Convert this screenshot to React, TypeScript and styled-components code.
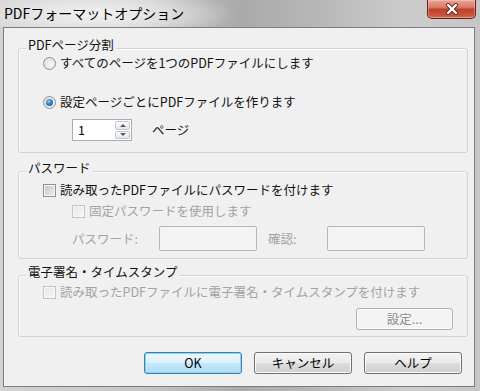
import React from 'react';
import styled, { createGlobalStyle } from 'styled-components';

const FONT = `"Noto Sans CJK JP", "Noto Sans", sans-serif`;

const GlobalStyle = createGlobalStyle`
  html, body {
    margin: 0;
    padding: 0;
    background: #c4c4c4;
  }
  body {
    font-family: ${FONT};
  }
`;

const Window = styled.div`
  width: 480px;
  height: 391px;
  box-sizing: border-box;
  padding-bottom: 4px;
  display: flex;
  flex-direction: column;
  background: linear-gradient(to right, #d2d2d2 0%, #c6c6c6 30%, #aaaaaa 50%, #b6b6b6 65%, #cccccc 85%, #c6c6c6 100%);
`;

const TitleBar = styled.div`
  height: 27px;
  flex: none;
  display: flex;
  justify-content: space-between;
  align-items: flex-start;
  padding: 0 4px 0 4px;
  background:
    radial-gradient(ellipse 140px 26px at 95px 14px, rgba(244, 244, 244, 0.95) 0%, rgba(236, 236, 236, 0.65) 55%, rgba(236, 236, 236, 0) 100%);
`;

const TitleText = styled.div`
  font-size: 14px;
  line-height: 27px;
  color: #000;
`;

const CloseButton = styled.div`
  width: 49px;
  height: 19px;
  box-sizing: border-box;
  border: 1px solid #5e2419;
  border-top: none;
  border-radius: 0 0 5px 5px;
  background: linear-gradient(#e9a494 0%, #d97d69 40%, #c23f2a 52%, #c8533c 85%, #d77558 100%);
  box-shadow: inset 0 0 0 1px rgba(255, 230, 220, 0.35);
  display: flex;
  align-items: center;
  justify-content: center;
`;

const Client = styled.div`
  flex: 1;
  margin: 0 5px 0 3px;
  box-sizing: border-box;
  border: 1px solid #7d7d7d;
  background: #f0f0f0;
  padding: 20px 6px 0 14px;
  display: flex;
  flex-direction: column;
  font-size: 12.5px;
  line-height: 18px;
  color: #111;
`;

const Group = styled.div<{ $gap?: number; $pad: number }>`
  margin-top: ${p => p.$gap ?? 0}px;
  border: 1px solid #d3d3d3;
  border-radius: 3px;
  box-shadow: inset 1px 1px 0 #fbfbfb;
  padding: 0 0 ${p => p.$pad}px 0;
  display: flex;
  flex-direction: column;
`;

const Caption = styled.div`
  align-self: flex-start;
  margin: -12px 0 0 7px;
  padding: 0 2px;
  line-height: 16px;
  background: #f0f0f0;
  color: #111;
`;

const Row = styled.div<{ $top: number; $indent: number; $disabled?: boolean }>`
  margin-top: ${p => p.$top}px;
  padding-left: ${p => p.$indent}px;
  height: 18px;
  display: flex;
  align-items: center;
  gap: 4px;
  color: ${p => (p.$disabled ? '#a2a2a2' : '#111')};
  white-space: nowrap;
`;

const Radio = styled.span<{ $checked?: boolean }>`
  position: relative;
  width: 13px;
  height: 13px;
  flex: none;
  box-sizing: border-box;
  border-radius: 50%;
  border: 1px solid #8f9090;
  background: radial-gradient(circle at 60% 60%, #f6f6f6 0%, #e2e2e2 70%, #d0d0d0 100%);

  &::after {
    content: '';
    display: ${p => (p.$checked ? 'block' : 'none')};
    position: absolute;
    left: 2px;
    top: 2px;
    width: 7px;
    height: 7px;
    border-radius: 50%;
    background: radial-gradient(circle at 40% 35%, #8fd0f5 0%, #2e7fc4 45%, #17497e 100%);
  }
`;

const Check = styled.span<{ $disabled?: boolean }>`
  width: 13px;
  height: 13px;
  flex: none;
  box-sizing: border-box;
  border: 1px solid ${p => (p.$disabled ? '#c4c4c4' : '#8e8f8f')};
  background: ${p =>
    p.$disabled
      ? 'linear-gradient(135deg, #e6e6e6, #f7f7f7)'
      : 'linear-gradient(135deg, #c2c4c7, #eeeeef)'};
  box-shadow: inset 0 0 0 1px #f8f8f8;
`;

const SpinRow = styled.div`
  margin-top: 8px;
  padding-left: 53px;
  display: flex;
  align-items: center;
  gap: 20px;
`;

const SpinBox = styled.div`
  width: 60px;
  height: 22px;
  box-sizing: border-box;
  border: 1px solid #abadb3;
  background: #fff;
  display: flex;
`;

const SpinValue = styled.div`
  flex: 1;
  padding-left: 5px;
  line-height: 20px;
  color: #000;
`;

const SpinButtons = styled.div`
  width: 15px;
  display: flex;
  flex-direction: column;
  gap: 1px;
  padding: 1px;
`;

const SpinArrow = styled.div<{ $down?: boolean }>`
  flex: 1;
  border: 1px solid #c3c7cc;
  border-radius: 2px;
  background: linear-gradient(#fbfbfb, #e4e6e9);
  display: flex;
  align-items: center;
  justify-content: center;

  &::after {
    content: '';
    width: 0;
    height: 0;
    border-left: 3px solid transparent;
    border-right: 3px solid transparent;
    ${p => (p.$down ? 'border-top: 3px solid #4b5a6b;' : 'border-bottom: 3px solid #4b5a6b;')}
  }
`;

const FieldRow = styled.div`
  margin-top: 6px;
  padding-left: 53px;
  display: flex;
  align-items: center;
  color: #a2a2a2;
`;

const FieldLabel = styled.div<{ $w: number }>`
  width: ${p => p.$w}px;
  flex: none;
`;

const TextBox = styled.div`
  width: 98px;
  height: 25px;
  box-sizing: border-box;
  border: 1px solid #b8b8b8;
  border-radius: 2px;
  background: #f4f4f4;
  margin-right: 11px;
`;

const Button = styled.div<{ $default?: boolean; $disabled?: boolean; $w?: number }>`
  width: ${p => p.$w ?? 98}px;
  height: 22px;
  box-sizing: border-box;
  border-radius: 3px;
  display: flex;
  align-items: center;
  justify-content: center;
  font-size: 12.5px;
  color: ${p => (p.$disabled ? '#8d8d8d' : '#000')};
  border: 1px solid ${p => (p.$default ? '#3c7fb1' : p.$disabled ? '#adb2b5' : '#707070')};
  background: ${p =>
    p.$default
      ? 'linear-gradient(#ecf7fd 0%, #dcf1fc 50%, #c4e8fa 50%, #b0dcf3 100%)'
      : p.$disabled
      ? '#f4f4f4'
      : 'linear-gradient(#f2f2f2 0%, #ebebeb 50%, #dddddd 50%, #cfcfcf 100%)'};
  box-shadow: inset 0 0 0 1px ${p => (p.$default ? '#8fd3f2' : '#fbfbfb')};
`;

const SettingsRow = styled.div`
  margin-top: 7px;
  padding-right: 14px;
  display: flex;
  justify-content: flex-end;
`;

const ButtonBar = styled.div`
  margin-top: 15px;
  padding-right: 6px;
  display: flex;
  justify-content: flex-end;
  gap: 12px;
`;

const CloseGlyph = () => (
  <svg width="14" height="12" viewBox="0 0 14 12">
    <path d="M3 2 L11 10 M11 2 L3 10" stroke="#6a261b" strokeWidth="4.2" strokeLinecap="round" />
    <path d="M3 2 L11 10 M11 2 L3 10" stroke="#ffffff" strokeWidth="2.4" strokeLinecap="round" />
  </svg>
);

export default function App() {
  return (
    <>
      <GlobalStyle />
      <Window>
        <TitleBar>
          <TitleText>PDFフォーマットオプション</TitleText>
          <CloseButton>
            <CloseGlyph />
          </CloseButton>
        </TitleBar>
        <Client>
          <Group $pad={11}>
            <Caption>PDFページ分割</Caption>
            <Row $top={1} $indent={24}>
              <Radio />
              <span>すべてのページを1つのPDFファイルにします</span>
            </Row>
            <Row $top={21} $indent={24}>
              <Radio $checked />
              <span>設定ページごとにPDFファイルを作ります</span>
            </Row>
            <SpinRow>
              <SpinBox>
                <SpinValue>1</SpinValue>
                <SpinButtons>
                  <SpinArrow />
                  <SpinArrow $down />
                </SpinButtons>
              </SpinBox>
              <span>ページ</span>
            </SpinRow>
          </Group>

          <Group $gap={18} $pad={7}>
            <Caption>パスワード</Caption>
            <Row $top={5} $indent={24}>
              <Check />
              <span>読み取ったPDFファイルにパスワードを付けます</span>
            </Row>
            <Row $top={3} $indent={53} $disabled>
              <Check $disabled />
              <span>固定パスワードを使用します</span>
            </Row>
            <FieldRow>
              <FieldLabel $w={87}>パスワード:</FieldLabel>
              <TextBox />
              <FieldLabel $w={59}>確認:</FieldLabel>
              <TextBox />
            </FieldRow>
          </Group>

          <Group $gap={16} $pad={6}>
            <Caption>電子署名・タイムスタンプ</Caption>
            <Row $top={3} $indent={24} $disabled>
              <Check $disabled />
              <span>読み取ったPDFファイルに電子署名・タイムスタンプを付けます</span>
            </Row>
            <SettingsRow>
              <Button $disabled $w={97}>設定...</Button>
            </SettingsRow>
          </Group>

          <ButtonBar>
            <Button $default>OK</Button>
            <Button>キャンセル</Button>
            <Button>ヘルプ</Button>
          </ButtonBar>
        </Client>
      </Window>
    </>
  );
}
